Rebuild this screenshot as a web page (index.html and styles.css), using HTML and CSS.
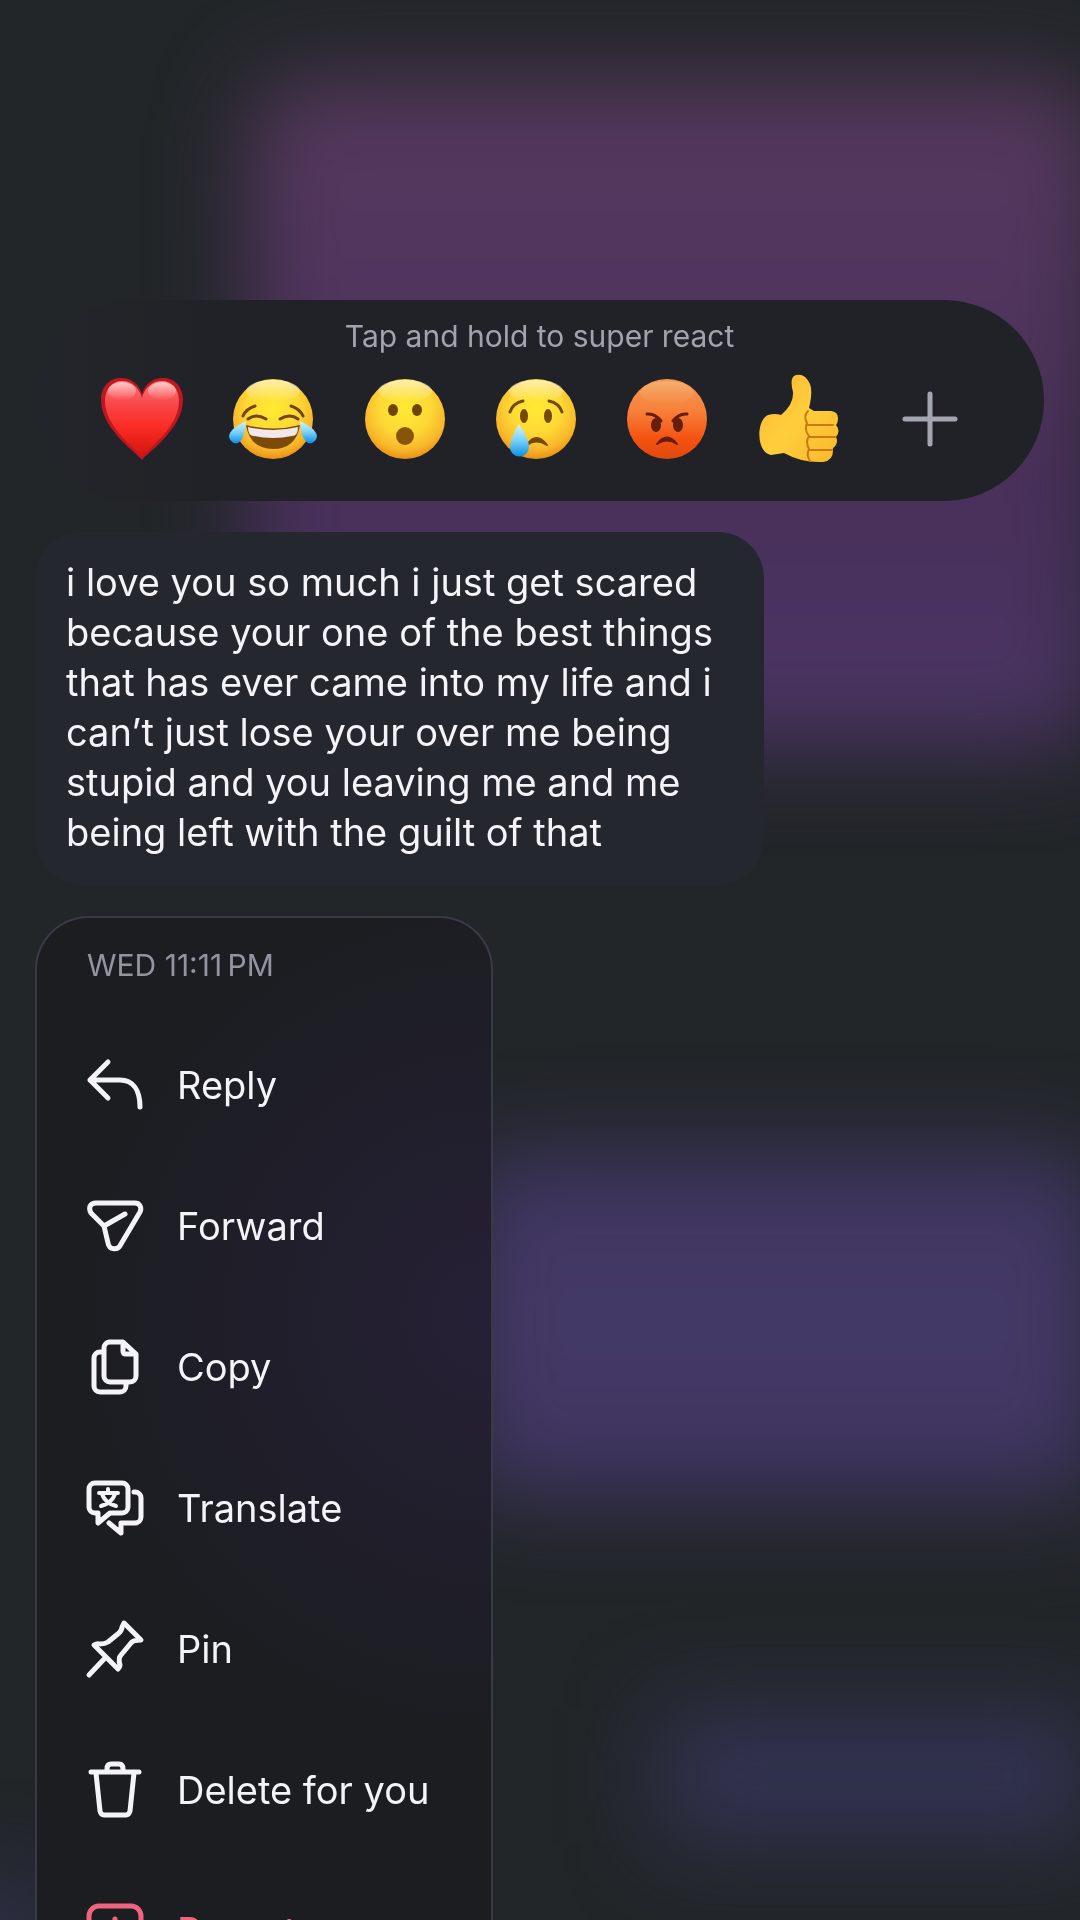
FILE: index.html
```html
<!DOCTYPE html>
<html lang="en">
<head>
<meta charset="utf-8">
<meta name="viewport" content="width=device-width, initial-scale=1">
<title>Message actions</title>
<link rel="stylesheet" href="styles.css">
</head>
<body>
<div class="backdrop" aria-hidden="true">
  <div class="glow glow-plum"></div>
  <div class="glow glow-indigo"></div>
  <div class="glow glow-navy"></div>
  <div class="glow glow-corner"></div>
</div>
<main class="sheet">
  <section class="reactions" aria-label="Reactions">
    <p class="hint">Tap and hold to super react</p>
    <div class="reaction-row">
      <button class="reaction" type="button" aria-label="Love">
        <svg viewBox="0 0 88 88">
          <defs>
            <linearGradient id="heart" x1="0" y1="0" x2="0" y2="1"><stop offset="0" stop-color="#ff7a78"/><stop offset=".3" stop-color="#f9474a"/><stop offset=".6" stop-color="#fb2d25"/><stop offset="1" stop-color="#d3130d"/></linearGradient>
            <linearGradient id="shine" x1="0" y1="0" x2="0" y2="1"><stop offset="0" stop-color="#fff" stop-opacity=".6"/><stop offset="1" stop-color="#fff" stop-opacity="0"/></linearGradient>
            <radialGradient id="face" cx=".5" cy=".36" r=".66"><stop offset="0" stop-color="#ffea32"/><stop offset=".5" stop-color="#fdd835"/><stop offset=".8" stop-color="#f8b62b"/><stop offset="1" stop-color="#e78a12"/></radialGradient>
            <linearGradient id="anger" x1="0" y1="0" x2="0" y2="1"><stop offset="0" stop-color="#f39a4c"/><stop offset=".4" stop-color="#f7803a"/><stop offset=".75" stop-color="#f55211"/><stop offset="1" stop-color="#de4a0c"/></linearGradient>
            <linearGradient id="tear" x1="0" y1="0" x2="0" y2="1"><stop offset="0" stop-color="#d5f4ff"/><stop offset=".5" stop-color="#7bd2f8"/><stop offset="1" stop-color="#0d8fe2"/></linearGradient>
            <linearGradient id="hand" x1="0" y1="0" x2="1" y2="1"><stop offset="0" stop-color="#f9b62e"/><stop offset=".5" stop-color="#ffce3d"/><stop offset="1" stop-color="#f9b72b"/></linearGradient>
          </defs>
          <path d="M44 85C38 77 3 54 3 25C3 11 12 3 23 3C33 3 41 9 44 19C47 9 55 3 65 3C76 3 85 11 85 25C85 54 50 77 44 85Z" fill="#bd1720"/>
          <path d="M44 82C39 74 7 53 7 26C7 14 14 6 24 6C33 6 41 12 44 23C47 12 55 6 64 6C74 6 81 14 81 26C81 53 49 74 44 82Z" fill="url(#heart)"/>
          <ellipse cx="24" cy="16" rx="14" ry="9" fill="url(#shine)"/><ellipse cx="64" cy="16" rx="14" ry="9" fill="url(#shine)"/>
        </svg>
      </button>
      <button class="reaction" type="button" aria-label="Laugh">
        <svg viewBox="0 0 88 88">
          <circle cx="44" cy="44" r="40" fill="url(#face)"/><ellipse cx="44" cy="16" rx="27" ry="11" fill="url(#shine)"/>
          <g fill="none" stroke="#754507" stroke-width="3" stroke-linecap="round"><path d="M14 41Q17 34 26 31M74 41Q71 34 62 31"/><path d="M19 44Q27 38 37 44M51 44Q61 38 69 44"/></g>
          <path d="M17 50Q44 57 71 50Q67 74 44 74Q21 74 17 50Z" fill="#7d4b08"/>
          <path d="M19 52Q44 58 69 52Q69 61 63 61Q44 65 25 61Q19 61 19 52Z" fill="#f1e8ec"/>
          <path d="M17 46Q16 64 9 68A7 7 0 0 1 1 58Q3 53 17 46Z" fill="url(#tear)"/>
          <path d="M71 46Q72 64 79 68A7 7 0 0 0 87 58Q85 53 71 46Z" fill="url(#tear)"/>
        </svg>
      </button>
      <button class="reaction" type="button" aria-label="Wow">
        <svg viewBox="0 0 88 88">
          <circle cx="44" cy="44" r="40" fill="url(#face)"/><ellipse cx="44" cy="16" rx="27" ry="11" fill="url(#shine)"/>
          <g fill="#704407"><ellipse cx="32" cy="35" rx="5" ry="6"/><ellipse cx="56" cy="35" rx="5" ry="6"/></g>
          <circle cx="44" cy="61" r="9" fill="#875507"/>
        </svg>
      </button>
      <button class="reaction" type="button" aria-label="Sad">
        <svg viewBox="0 0 88 88">
          <circle cx="44" cy="44" r="40" fill="url(#face)"/><ellipse cx="44" cy="16" rx="27" ry="11" fill="url(#shine)"/>
          <g fill="#754807"><ellipse cx="32" cy="41" rx="4" ry="7"/><ellipse cx="56" cy="41" rx="4" ry="7"/></g>
          <path d="M18 37Q21 28 31 26M70 37Q67 28 57 26" fill="none" stroke="#754807" stroke-width="3" stroke-linecap="round"/>
          <path d="M35 70Q44 56 55 70Q44 63 35 70Z" fill="#754807" stroke="#754807" stroke-width="2" stroke-linejoin="round"/>
          <path d="M27 49Q37 64 37 72A9 9 0 0 1 18 72Q18 64 27 49Z" fill="url(#tear)"/>
        </svg>
      </button>
      <button class="reaction" type="button" aria-label="Angry">
        <svg viewBox="0 0 88 88">
          <circle cx="44" cy="44" r="40" fill="url(#anger)"/><ellipse cx="44" cy="18" rx="27" ry="12" fill="url(#shine)" opacity=".35"/>
          <g fill="#641e0b"><ellipse cx="33" cy="50" rx="5" ry="7"/><ellipse cx="55" cy="50" rx="5" ry="7"/></g>
          <path d="M24 39Q32 38 38 46M64 39Q56 38 50 46" fill="none" stroke="#641e0b" stroke-width="3" stroke-linecap="round"/>
          <path d="M34 69Q44 56 54 69Q44 62 34 69Z" fill="#641e0b" stroke="#641e0b" stroke-width="2" stroke-linejoin="round"/>
        </svg>
      </button>
      <button class="reaction" type="button" aria-label="Like">
        <svg viewBox="0 0 88 88">
          <path d="M13 40Q20 38 26 40Q39 29 38 17Q34 2 41 0Q50-2 55 9Q58 17 54 33L59 36H76Q83 37 83 43Q83 48 81 50Q86 56 81 62Q84 68 78 73Q79 86 68 87Q47 88 29 78L16 80C1 78 1 45 13 40Z" fill="url(#hand)"/>
          <g fill="none" stroke="#c77b12" stroke-width="2" stroke-linecap="round"><path d="M53 36Q48 41 52 48Q49 55 54 61Q50 67 54 74Q51 80 55 86M53 50H78M54 62H80M54 75H77"/></g>
        </svg>
      </button>
      <button class="reaction" type="button" aria-label="More reactions">
        <svg viewBox="0 0 88 88"><path d="M44 19V69M19 44H69" fill="none" stroke="#a3a6b1" stroke-width="5" stroke-linecap="round"/></svg>
      </button>
    </div>
  </section>

  <p class="bubble">i love you so much i just get scared because your one of the best things that has ever came into my life and i can’t just lose your over me being stupid and you leaving me and me being left with the guilt of that</p>

  <section class="menu" aria-label="Message menu">
    <h2 class="stamp">WED 11:11&#8239;PM</h2>
    <button class="item" type="button">
      <svg class="icon" viewBox="0 0 56 56"><path d="M21 5L3 23L21 41M3 23H33C46 23 53 33 53 50"/></svg>Reply
    </button>
    <button class="item" type="button">
      <svg class="icon" viewBox="0 0 56 56"><path d="M9 5H48C53 5 55 10 53 14L34 46C31 53 22 52 21 45L17 28L4 15C1 10 3 5 9 5ZM17 28L38 16"/></svg>Forward
    </button>
    <button class="item" type="button">
      <svg class="icon" viewBox="0 0 56 56"><path d="M22 3H36L49 15V37A6 6 0 0 1 43 43H23A6 6 0 0 1 17 37V9A6 6 0 0 1 23 3M36 4V12Q36 15 39 15H48M17 13H13A6 6 0 0 0 7 19V47A6 6 0 0 0 13 53H33A6 6 0 0 0 39 47V44"/></svg>Copy
    </button>
    <button class="item" type="button">
      <svg class="icon" viewBox="0 0 56 56"><path d="M8 3H35A6 6 0 0 1 41 9V27A6 6 0 0 1 35 33H23L11 43V33H8A6 6 0 0 1 2 27V9A6 6 0 0 1 8 3ZM47 12H48A6 6 0 0 1 54 18V37A6 6 0 0 1 48 43H34V53L22 43"/><path class="fine" d="M21 9V12M12 13H31M28 14Q25 23 14 26M15 14Q18 23 29 26"/></svg>Translate
    </button>
    <button class="item" type="button">
      <svg class="icon" viewBox="0 0 56 56"><path d="M37 2L54 19Q46 19 44 22L34 34Q31 37 33 44Q33 46 31 48L7 24Q10 22 13 23Q18 23 21 21L32 12Q35 9 35 6ZM19 36L2 54"/></svg>Pin
    </button>
    <button class="item" type="button">
      <svg class="icon" viewBox="0 0 56 56"><path d="M4 10H52M20 9V7Q20 2 24 2H32Q36 2 36 7V9M9 11L13 49Q14 53 17 53H39Q42 53 43 49L47 11"/></svg>Delete for you
    </button>
    <button class="item item-danger" type="button">
      <svg class="icon" viewBox="0 0 56 56"><path d="M12 3H44A10 10 0 0 1 54 13V43A10 10 0 0 1 44 53H12A10 10 0 0 1 2 43V13A10 10 0 0 1 12 3ZM28 16V31M28 41V42"/></svg>Report
    </button>
  </section>
</main>
</body>
</html>
```
FILE: styles.css
```css
* { box-sizing: border-box; margin: 0; }

body {
  height: 100vh;
  overflow: hidden;
  background: #222629;
  color: #f4f4f8;
  font-family: Inter, "Liberation Sans", sans-serif;
}

button {
  border: 0;
  padding: 0;
  background: none;
  color: inherit;
  font: inherit;
  cursor: pointer;
}

svg { display: block; overflow: visible; }

/* Blurred chat bubbles behind the sheet */
.backdrop {
  position: fixed;
  inset: 0;
  z-index: -1;
  overflow: hidden;
}

.glow { position: absolute; filter: blur(44px); }

.glow-plum {
  inset: 4% -2% 61% 23%;
  border-radius: 60px;
  background: linear-gradient(#54385a, #54375f 20%, #49305a 60%, #4a3462 90%);
}

.glow-indigo {
  inset: 60% -2% 22% 43%;
  border-radius: 40px;
  background: linear-gradient(#3e355f, #453a68 50%, #3e345f);
}

.glow-navy {
  inset: 89% -1% 4% 61%;
  background: #323250;
}

.glow-corner {
  inset: 98% 95% -4% -6%;
  background: #2f304b;
}

.sheet {
  display: flex;
  flex-direction: column;
  align-items: flex-start;
  gap: 31px;
  padding: 300px 36px 0 35px;
}

.reactions {
  align-self: stretch;
  height: 201px;
  padding-top: 18px;
  border-radius: 100px;
  background: linear-gradient(90deg, #222529, #212227 20%);
}

.hint {
  color: #a1a3ae;
  font-size: 30px;
  line-height: 36px;
  text-align: center;
}

.reaction-row {
  display: flex;
  justify-content: space-between;
  padding: 21px 48px 0 41px;
}

.reaction {
  display: grid;
  place-items: center;
  flex: 1;
}

.reaction svg { width: 88px; height: 88px; }

.bubble {
  max-width: 729px;
  padding: 25px 31px 28px;
  border-radius: 46px;
  background: #24272d;
  font-size: 38px;
  line-height: 50px;
}

.menu {
  display: flex;
  flex-direction: column;
  min-width: 458px;
  padding: 29px 50px 40px;
  border: 2px solid #3a3a47;
  border-radius: 54px;
  background: radial-gradient(circle at 100% 400px, #262036, #1f1e29 260px, #1c1d21 420px);
}

.stamp {
  padding-bottom: 31px;
  color: #9295a0;
  font-size: 30px;
  font-weight: 400;
  line-height: 36px;
}

.item {
  display: flex;
  align-items: center;
  gap: 34px;
  height: 141px;
  font-size: 38px;
  line-height: 50px;
  white-space: nowrap;
}

.item-danger { color: #f0647f; }

.icon {
  width: 56px;
  height: 56px;
  fill: none;
  stroke: currentColor;
  stroke-width: 5;
  stroke-linecap: round;
  stroke-linejoin: round;
}

.fine { stroke-width: 4; }
```
